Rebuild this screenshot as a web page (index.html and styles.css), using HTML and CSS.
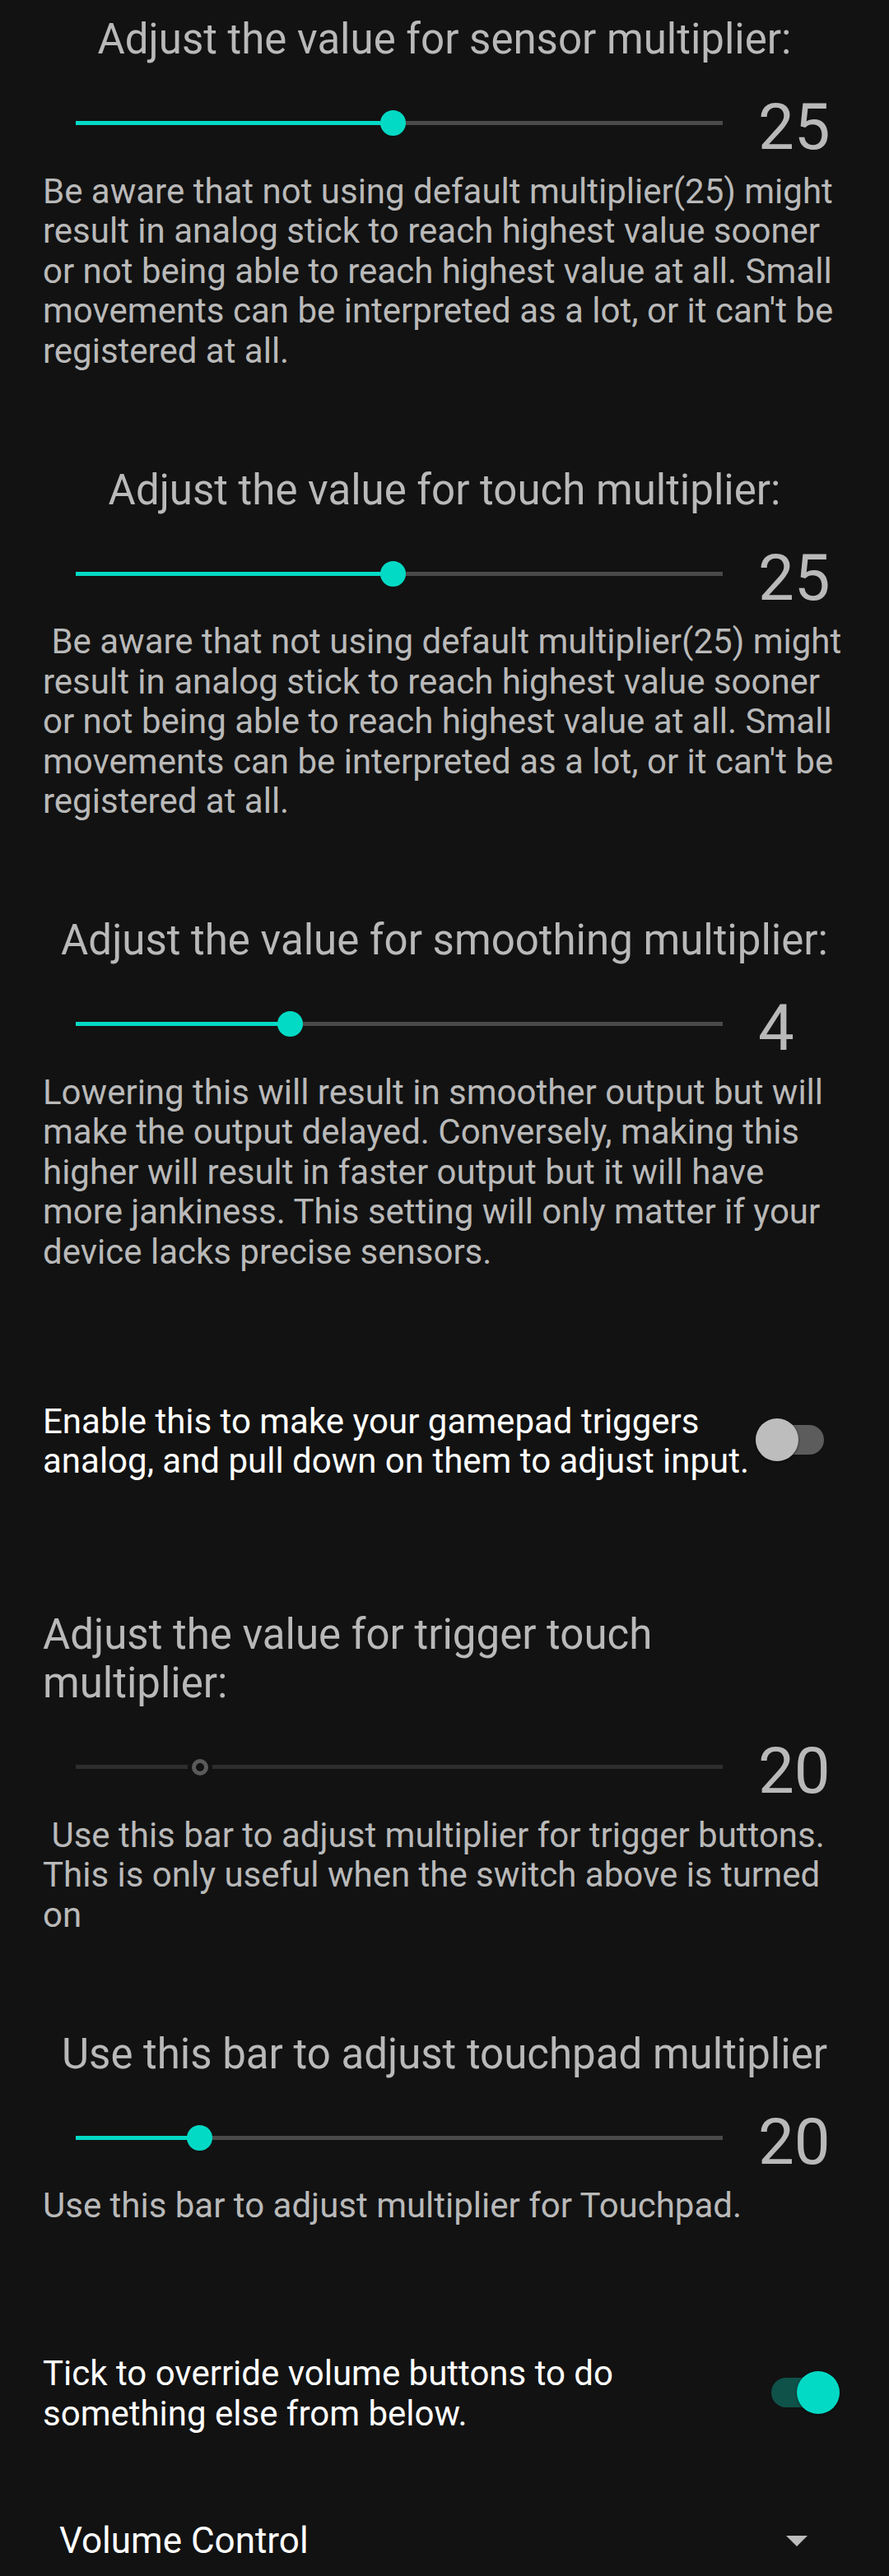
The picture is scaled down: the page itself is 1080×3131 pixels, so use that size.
FILE: index.html
```html
<!DOCTYPE html>
<html lang="en">
<head>
<meta charset="utf-8">
<title>Multiplier settings</title>
<link rel="stylesheet" href="styles.css">
</head>
<body>
<main class="screen">
  <section class="setting">
    <h2 class="setting-title centered">Adjust the value for sensor multiplier:</h2>
    <div class="slider-row">
      <div class="slider">
        <div class="track"><div class="fill" style="width:49%"></div></div>
        <div class="thumb" style="left:49%"></div>
      </div>
      <span class="value">25</span>
    </div>
    <p class="desc">Be aware that not using default multiplier(25) might result in analog stick to reach highest value sooner or not being able to reach highest value at all. Small movements can be interpreted as a lot, or it can't be registered at all.</p>
  </section>

  <section class="setting">
    <h2 class="setting-title centered">Adjust the value for touch multiplier:</h2>
    <div class="slider-row">
      <div class="slider">
        <div class="track"><div class="fill" style="width:49%"></div></div>
        <div class="thumb" style="left:49%"></div>
      </div>
      <span class="value">25</span>
    </div>
    <p class="desc">&nbsp;Be aware that not using default multiplier(25) might result in analog stick to reach highest value sooner or not being able to reach highest value at all. Small movements can be interpreted as a lot, or it can't be registered at all.</p>
  </section>

  <section class="setting">
    <h2 class="setting-title centered">Adjust the value for smoothing multiplier:</h2>
    <div class="slider-row">
      <div class="slider">
        <div class="track"><div class="fill" style="width:33.2%"></div></div>
        <div class="thumb" style="left:33.2%"></div>
      </div>
      <span class="value">4</span>
    </div>
    <p class="desc">Lowering this will result in smoother output but will make the output delayed. Conversely, making this higher will result in faster output but it will have more jankiness. This setting will only matter if your device lacks precise sensors.</p>
  </section>

  <div class="switch-row triggers">
    <span class="switch-label">Enable this to make your gamepad triggers analog, and pull down on them to adjust input.</span>
    <span class="switch off"><span class="switch-track"></span><span class="switch-thumb"></span></span>
  </div>

  <section class="setting">
    <h2 class="setting-title narrow">Adjust the value for trigger touch multiplier:</h2>
    <div class="slider-row">
      <div class="slider disabled">
        <div class="track"></div>
        <div class="thumb ring" style="left:19.2%"></div>
      </div>
      <span class="value">20</span>
    </div>
    <p class="desc">&nbsp;Use this bar to adjust multiplier for trigger buttons. This is only useful when the switch above is turned on</p>
  </section>

  <section class="setting">
    <h2 class="setting-title centered">Use this bar to adjust touchpad multiplier</h2>
    <div class="slider-row">
      <div class="slider">
        <div class="track"><div class="fill" style="width:19.1%"></div></div>
        <div class="thumb" style="left:19.1%"></div>
      </div>
      <span class="value">20</span>
    </div>
    <p class="desc">Use this bar to adjust multiplier for Touchpad.</p>
  </section>

  <div class="switch-row volume-override">
    <span class="switch-label">Tick to override volume buttons to do something else from below.</span>
    <span class="switch on"><span class="switch-track"></span><span class="switch-thumb"></span></span>
  </div>

  <div class="dropdown">
    <span class="dropdown-text">Volume Control</span>
    <svg class="dropdown-arrow" width="26" height="13" viewBox="0 0 26 13" aria-hidden="true"><polygon points="0,0 26,0 13,13" fill="#bcbcbc"/></svg>
  </div>
</main>
</body>
</html>
```
FILE: styles.css
```css
html, body {
  margin: 0;
  padding: 0;
  background: #121212;
}

body {
  font-family: Roboto, "Noto Sans", "Liberation Sans", sans-serif;
  color: #b9b9b9;
}

.screen {
  width: 1080px;
  min-height: 3131px;
  padding-top: 18.1px;
  box-sizing: border-box;
}

.setting + .setting {
  margin-top: 114.5px;
}

.setting-title {
  margin: 0;
  padding: 0 52px;
  font-size: 51px;
  line-height: 59px;
  font-weight: 400;
  color: #b9b9b9;
}

.setting-title.centered {
  text-align: center;
  padding: 0;
}

.setting-title.narrow {
  padding-right: 140px;
}

.slider-row {
  display: flex;
  align-items: flex-start;
  height: 131.5px;
}

.slider {
  position: relative;
  flex: none;
  width: 786px;
  height: 30px;
  margin: 57.6px 0 0 92px;
}

.track {
  position: absolute;
  left: 0;
  right: 0;
  top: 12.5px;
  height: 5px;
  background: #4a4a4a;
}

.fill {
  height: 100%;
  background: #03dac5;
}

.thumb {
  position: absolute;
  top: 0;
  width: 31px;
  height: 31px;
  margin-left: -15.5px;
  margin-top: -0.5px;
  border-radius: 50%;
  background: #03dac5;
}

.slider.disabled .track {
  background: #2d2d2d;
}

.thumb.ring {
  top: 5px;
  width: 20px;
  height: 20px;
  margin-left: -10px;
  margin-top: 0;
  box-sizing: border-box;
  background: #121212;
  border: 5px solid #5a5a5a;
  box-shadow: 0 0 0 5px #121212;
}

.value {
  margin: 32px 0 0 43px;
  font-size: 78px;
  line-height: 92px;
  color: #b9b9b9;
}

.desc {
  margin: 0;
  padding: 0 52px;
  font-size: 42px;
  line-height: 48.5px;
  color: #b9b9b9;
}

.switch-row {
  display: flex;
  align-items: center;
  padding-left: 52px;
}

.switch-row.triggers {
  margin: 157.5px 0 156.5px;
}

.switch-row.volume-override {
  margin: 155.5px 0 104px;
}

.switch-label {
  flex: 1;
  font-size: 42px;
  line-height: 48.5px;
  color: #ffffff;
}

.volume-override .switch-label {
  padding-right: 20px;
}

.switch {
  position: relative;
  flex: none;
  width: 83px;
  height: 52px;
}

.triggers .switch {
  margin-right: 79px;
  margin-top: -4px;
}

.volume-override .switch {
  margin-right: 60px;
  margin-top: -3px;
}

.switch-track {
  position: absolute;
  left: 0;
  right: 0;
  top: 8px;
  height: 36px;
  border-radius: 18px;
  background: #5c5c5c;
}

.switch-thumb {
  position: absolute;
  top: 0;
  left: 0;
  width: 52px;
  height: 52px;
  border-radius: 50%;
  background: #bdbdbd;
  box-shadow: 0 1px 3px rgba(0, 0, 0, 0.55);
}

.switch.on .switch-track {
  background: #0f524a;
}

.switch.on .switch-thumb {
  left: auto;
  right: 0;
  background: #03dac5;
}

.dropdown {
  display: flex;
  align-items: center;
  justify-content: space-between;
  padding: 0 99px 0 72px;
}

.dropdown-text {
  font-size: 44px;
  line-height: 52px;
  color: #ffffff;
}

.dropdown-arrow {
  display: block;
  flex: none;
}
```
